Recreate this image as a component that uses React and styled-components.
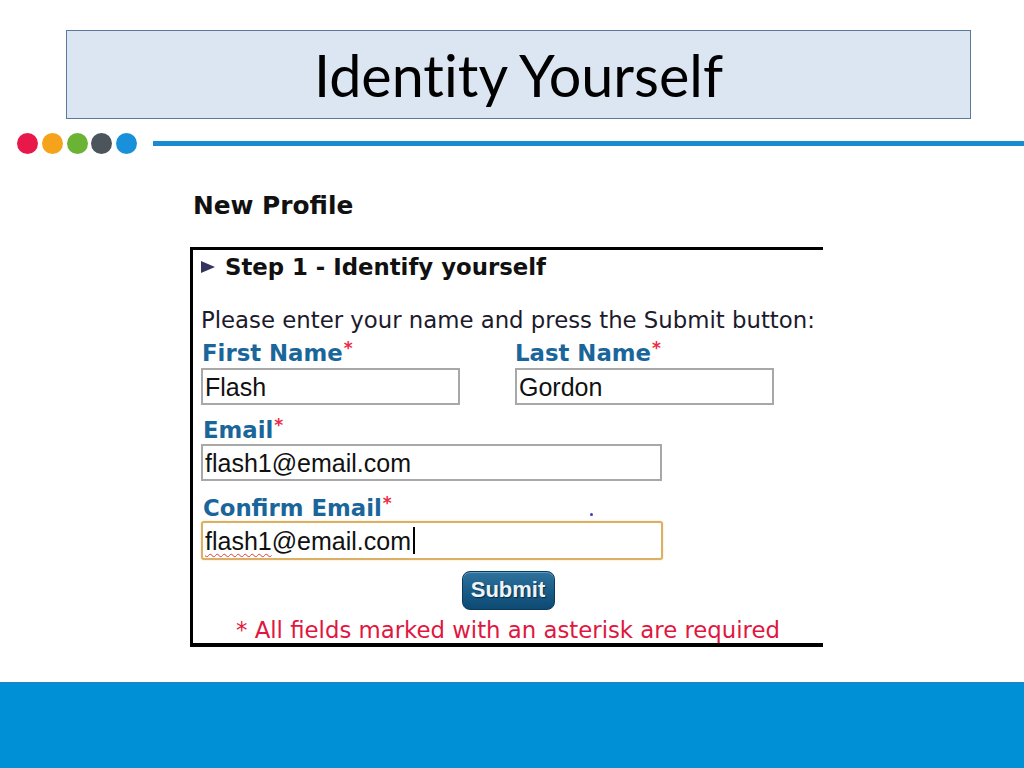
import styled, { createGlobalStyle } from "styled-components";

const GlobalStyle = createGlobalStyle`
  html, body {
    margin: 0;
    padding: 0;
    background: #ffffff;
  }
`;

const Slide = styled.div`
  width: 1024px;
  height: 768px;
  display: flex;
  flex-direction: column;
  background: #ffffff;
  overflow: hidden;
`;

const TitleBox = styled.div`
  box-sizing: border-box;
  margin: 30px 0 0 66px;
  width: 905px;
  height: 89px;
  border: 1px solid #5b7a9b;
  background: #dce6f2;
  display: flex;
  align-items: center;
  justify-content: center;
  font-family: Lato, "Open Sans", sans-serif;
  font-size: 57.5px;
  font-variant-ligatures: none;
  color: #000;
`;

const Divider = styled.div`
  margin-top: 14px;
  height: 21px;
  display: flex;
  align-items: center;
  padding-left: 17px;
`;

const Dots = styled.div`
  display: flex;
  gap: 3.75px;
`;

const Dot = styled.span`
  width: 21px;
  height: 21px;
  border-radius: 50%;
  background: ${(p) => p.color};
`;

const Rule = styled.div`
  flex: 1;
  margin-left: 16px;
  height: 5px;
  background: #1a8bd0;
`;

const Heading = styled.h2`
  margin: 38px 0 0 193px;
  font-family: "DejaVu Sans", Verdana, sans-serif;
  font-weight: bold;
  font-size: 24.8px;
  line-height: 28px;
  color: #111;
`;

const Panel = styled.div`
  box-sizing: border-box;
  margin: 27px 0 0 190px;
  width: 633px;
  border-left: 3px solid #000;
  border-top: 3px solid #000;
  border-bottom: 4px solid #000;
  padding: 3px 8px 0;
  font-family: "DejaVu Sans", Verdana, sans-serif;
  font-size: 22.8px;
  line-height: 28px;
  color: #1c1a2c;
`;

const StepTitle = styled.div`
  display: flex;
  align-items: center;
  font-weight: bold;
  color: #111;
`;

const Arrow = styled.span`
  width: 0;
  height: 0;
  border-left: 14px solid #34345e;
  border-top: 6px solid transparent;
  border-bottom: 6px solid transparent;
  margin-right: 10px;
`;

const Line = styled.div`
  margin-top: ${(p) => p.top || 0}px;
  white-space: nowrap;
`;

const Grid = styled.div`
  display: grid;
  grid-template-columns: 259px 259px;
  column-gap: 55px;
  margin-top: ${(p) => p.top || 0}px;
`;

const Label = styled.div`
  position: relative;
  height: 28px;
  margin-top: ${(p) => p.top || 0}px;
  padding-left: ${(p) => p.indent || 0}px;
  font-weight: bold;
  color: #1a669b;
  white-space: nowrap;
`;

const Star = styled.span`
  position: relative;
  top: -7px;
  color: #ec2b45;
  font-size: 17px;
  line-height: 0;
  margin-left: 1px;
`;

const Speck = styled.span`
  position: absolute;
  left: 389px;
  top: 19px;
  width: 3px;
  height: 3px;
  border-radius: 50%;
  background: #3a3ac8;
`;

const Field = styled.div`
  box-sizing: border-box;
  margin-top: ${(p) => p.top || 0}px;
  width: ${(p) => p.w}px;
  height: ${(p) => (p.focused ? 39 : 37)}px;
  border: 2px solid ${(p) => (p.focused ? "#dcb064" : "#a8a8a8")};
  border-radius: ${(p) => (p.focused ? 3 : 0)}px;
  box-shadow: ${(p) => (p.focused ? "0 0 2px #f2d69a" : "none")};
  padding-left: 2px;
  display: flex;
  align-items: center;
  font-family: "Liberation Sans", Arial, sans-serif;
  font-size: 25px;
  color: #111;
  background: #fff;
`;

const Misspelt = styled.span`
  text-decoration: underline wavy #e23a3a;
  text-decoration-thickness: 1px;
  text-underline-offset: 3px;
`;

const Caret = styled.span`
  width: 2px;
  height: 27px;
  margin-left: 2px;
  background: #000;
`;

const Center = styled.div`
  display: flex;
  justify-content: center;
  margin-top: ${(p) => p.top || 0}px;
`;

const SubmitButton = styled.button`
  box-sizing: border-box;
  width: 93px;
  height: 39px;
  border: 1px solid #0b3b5c;
  border-radius: 8px;
  background: linear-gradient(#2f729d 0%, #1b5f8a 45%, #0e4a73 100%);
  box-shadow: inset 0 1px 0 #5d9cc4;
  color: #eef4f8;
  font-family: "Liberation Sans", Arial, sans-serif;
  font-weight: bold;
  font-size: 22px;
  text-shadow: 1px 1px 1px #062a44;
  padding: 0 0 2px;
`;

const Note = styled.div`
  margin-top: 6px;
  margin-bottom: -1px;
  text-align: center;
  color: #e0173f;
  white-space: nowrap;
`;

const BottomBar = styled.div`
  margin-top: auto;
  height: 85px;
  border-top: 1px solid #2384c0;
  background: #0090d6;
`;

const dotColors = ["#e8194a", "#f6a31c", "#6bb334", "#4b555b", "#1990da"];

export default function App() {
  return (
    <Slide>
      <GlobalStyle />
      <TitleBox>Identity Yourself</TitleBox>
      <Divider>
        <Dots>
          {dotColors.map((c) => (
            <Dot key={c} color={c} />
          ))}
        </Dots>
        <Rule />
      </Divider>
      <Heading>New Profile</Heading>
      <Panel>
        <StepTitle>
          <Arrow />
          Step 1 - Identify yourself
        </StepTitle>
        <Line top={25}>Please enter your name and press the Submit button:</Line>
        <Grid top={5}>
          <Label indent={1}>
            First Name<Star>*</Star>
          </Label>
          <Label>
            Last Name<Star>*</Star>
          </Label>
          <Field w={259} top={1}>Flash</Field>
          <Field w={259} top={1}>Gordon</Field>
        </Grid>
        <Label top={11} indent={2}>
          Email<Star>*</Star>
        </Label>
        <Field w={461}>flash1@email.com</Field>
        <Label top={13} indent={2}>
          Confirm Email<Star>*</Star>
          <Speck />
        </Label>
        <Field w={462} top={-1} focused>
          <Misspelt>flash1</Misspelt>@email.com
          <Caret />
        </Field>
        <Center top={11}>
          <SubmitButton>Submit</SubmitButton>
        </Center>
        <Note>* All fields marked with an asterisk are required</Note>
      </Panel>
      <BottomBar />
    </Slide>
  );
}
